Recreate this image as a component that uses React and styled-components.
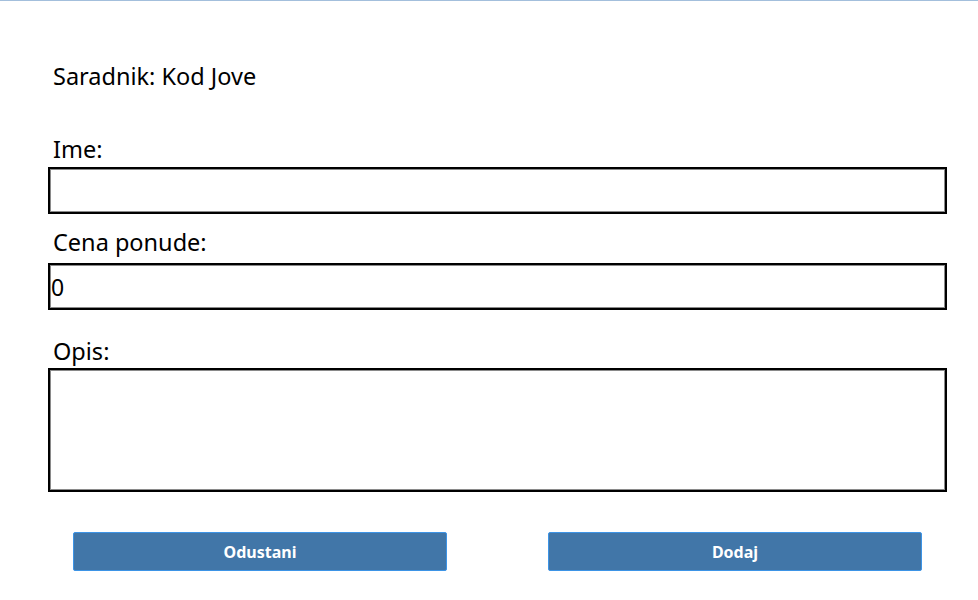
import React from "react";
import styled, { createGlobalStyle } from "styled-components";

const Global = createGlobalStyle`
  html, body { margin: 0; padding: 0; background: #ffffff; }
  body { font-family: "Noto Sans", "Open Sans", sans-serif; color: #000; }
`;

const Page = styled.div`
  border-top: 1px solid #a3bfdc;
  padding: 60px 31px 0 48px;
  width: 899px;
`;

const Label = styled.div`
  font-size: 23.5px;
  line-height: 30px;
  height: 30px;
  padding-left: 5px;
  margin-top: ${(p) => p.$top || 0}px;
  margin-bottom: ${(p) => p.$bottom || 0}px;
  white-space: nowrap;
`;

const Field = styled.input`
  display: block;
  box-sizing: border-box;
  width: 899px;
  height: 47px;
  margin: 0;
  padding: 0 0 0 1px;
  border: 2px solid #000;
  box-shadow: inset 1px 1px 0 #8a8a8a, inset -1px -1px 0 #8a8a8a;
  font-family: "Noto Sans", "Open Sans", sans-serif;
  font-size: 23px;
  color: #000;
  outline: none;
  background: #fff;
`;

const Area = styled.textarea`
  display: block;
  box-sizing: border-box;
  width: 899px;
  height: 124px;
  margin: 0;
  padding: 2px;
  border: 2px solid #000;
  box-shadow: inset 1px 1px 0 #8a8a8a, inset -1px -1px 0 #8a8a8a;
  font-family: "Noto Sans", "Open Sans", sans-serif;
  font-size: 23px;
  resize: none;
  outline: none;
  background: #fff;
`;

const Buttons = styled.div`
  display: flex;
  gap: 101px;
  margin-top: 40px;
  padding-left: 25px;
`;

const Button = styled.button`
  box-sizing: border-box;
  width: 374px;
  height: 39px;
  background: #4176a8;
  border: 1px solid #3d94e6;
  border-radius: 2px;
  color: #ffffff;
  font-family: "Noto Sans", "Open Sans", sans-serif;
  font-weight: 700;
  font-size: 16px;
  padding: 0;
  cursor: pointer;
`;

export default function App() {
  return (
    <>
      <Global />
      <Page>
        <Label>Saradnik: Kod Jove</Label>
        <Label $top={43} $bottom={3}>Ime:</Label>
        <Field type="text" defaultValue="" />
        <Label $top={13} $bottom={6}>Cena ponude:</Label>
        <Field type="text" defaultValue="0" />
        <Label $top={26} $bottom={2}>Opis:</Label>
        <Area defaultValue="" />
        <Buttons>
          <Button>Odustani</Button>
          <Button>Dodaj</Button>
        </Buttons>
      </Page>
    </>
  );
}
